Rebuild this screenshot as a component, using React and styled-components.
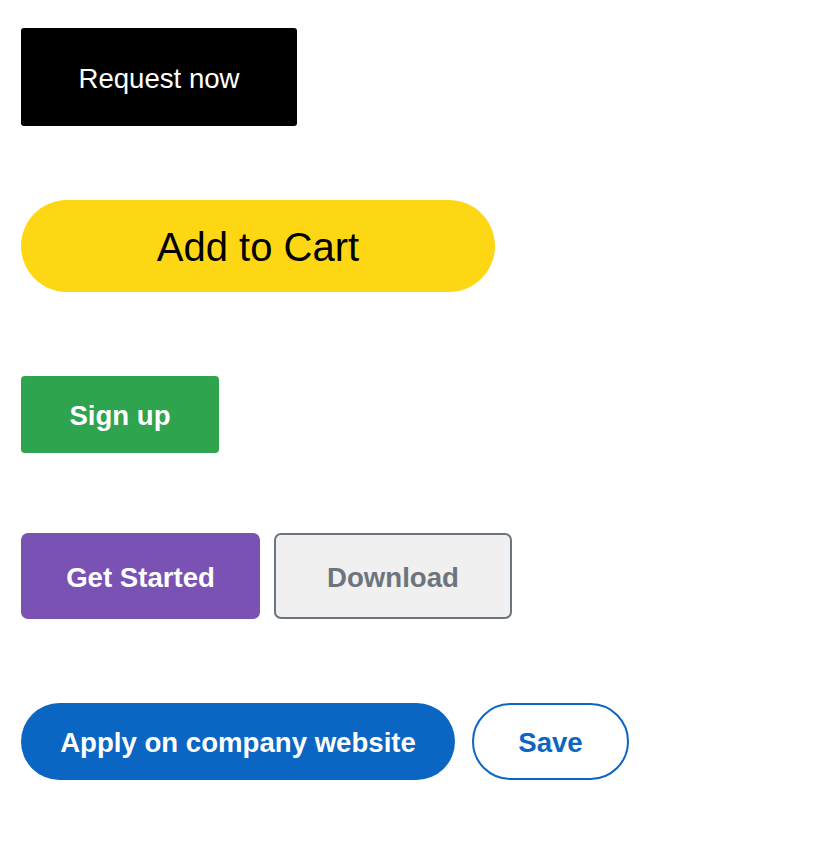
import React from "react";
import styled, { createGlobalStyle } from "styled-components";

const GlobalStyle = createGlobalStyle`
  body {
    margin: 0;
    background: #ffffff;
    font-family: "Liberation Sans", Arial, sans-serif;
  }
`;

const Page = styled.div`
  display: flex;
  flex-direction: column;
  align-items: flex-start;
  padding: 28px 21px;
`;

const Row = styled.div`
  display: flex;
  gap: ${(p) => p.$gap || 14}px;
  margin-top: ${(p) => p.$top || 0}px;
`;

const Base = styled.button`
  display: flex;
  align-items: center;
  justify-content: center;
  box-sizing: border-box;
  font-family: "Liberation Sans", Arial, sans-serif;
  font-size: 27.6px;
  border: none;
  cursor: pointer;
  padding: 3px 0 0;
`;

const RequestButton = styled(Base)`
  width: 276px;
  height: 98px;
  background: #000000;
  color: #ffffff;
  border-radius: 3px;
`;

const CartButton = styled(Base)`
  width: 474px;
  height: 92px;
  background: #fed714;
  color: #000000;
  font-size: 40px;
  border-radius: 46px;
`;

const SignupButton = styled(Base)`
  width: 198px;
  height: 77px;
  background: #2ea44f;
  color: #ffffff;
  font-weight: 700;
  border-radius: 4px;
`;

const StartButton = styled(Base)`
  width: 239px;
  height: 86px;
  background: #7952b3;
  color: #ffffff;
  font-weight: 700;
  border-radius: 7px;
`;

const DownloadButton = styled(Base)`
  width: 238px;
  height: 86px;
  background: #f0f0f0;
  color: #6c757d;
  border: 2px solid #6c757d;
  font-weight: 700;
  border-radius: 7px;
`;

const ApplyButton = styled(Base)`
  width: 434px;
  height: 77px;
  background: #0a66c2;
  color: #ffffff;
  font-weight: 700;
  border-radius: 39px;
`;

const SaveButton = styled(Base)`
  width: 157px;
  height: 77px;
  background: #ffffff;
  color: #0a66c2;
  border: 2px solid #0a66c2;
  font-weight: 700;
  border-radius: 39px;
`;

export default function App() {
  return (
    <>
      <GlobalStyle />
      <Page>
        <Row>
          <RequestButton>Request now</RequestButton>
        </Row>
        <Row $top={74}>
          <CartButton>Add to Cart</CartButton>
        </Row>
        <Row $top={84}>
          <SignupButton>Sign up</SignupButton>
        </Row>
        <Row $top={80} $gap={14}>
          <StartButton>Get Started</StartButton>
          <DownloadButton>Download</DownloadButton>
        </Row>
        <Row $top={84} $gap={17}>
          <ApplyButton>Apply on company website</ApplyButton>
          <SaveButton>Save</SaveButton>
        </Row>
      </Page>
    </>
  );
}
